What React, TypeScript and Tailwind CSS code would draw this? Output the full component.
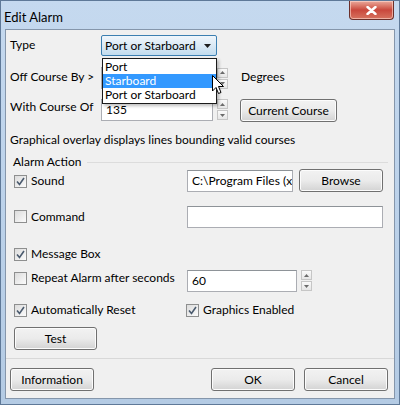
import React from "react";

const font = { fontFamily: '"Segoe UI", Lato, "Liberation Sans", Arial, sans-serif' };

function Check({ checked }: { checked?: boolean }) {
  return (
    <span className="flex h-[13px] w-[13px] shrink-0 items-center justify-center border border-[#8e8f8f] bg-gradient-to-br from-[#dcdcdc] to-[#fbfbfb]">
      {checked && (
        <svg width="9" height="9" viewBox="0 0 9 9">
          <path d="M1 4.5 L3.5 7.5 L8 1" fill="none" stroke="#4a5a6e" strokeWidth="1.6" />
        </svg>
      )}
    </span>
  );
}

function CheckRow({ checked, label }: { checked?: boolean; label: string }) {
  return (
    <div className="flex items-center gap-[4px]">
      <Check checked={checked} />
      <span>{label}</span>
    </div>
  );
}

function Btn({ label, w }: { label: string; w: string }) {
  return (
    <button
      type="button"
      className={`${w} h-[23px] rounded-[3px] border border-[#707070] bg-gradient-to-b from-[#f2f2f2] via-[#ebebeb] to-[#d3d3d3] text-[12px] text-black shadow-[inset_0_0_0_1px_#fcfcfc]`}
    >
      {label}
    </button>
  );
}

function Spin() {
  return (
    <div className="flex h-[21px] w-[11px] flex-col justify-between">
      <div className="flex h-[10px] items-center justify-center border border-[#c6c6c6] bg-gradient-to-b from-[#fafafa] to-[#e6e6e6]">
        <svg width="5" height="3" viewBox="0 0 5 3">
          <path d="M0 3 L2.5 0 L5 3Z" fill="#6b6b6b" />
        </svg>
      </div>
      <div className="flex h-[10px] items-center justify-center border border-[#c6c6c6] bg-gradient-to-b from-[#fafafa] to-[#e6e6e6]">
        <svg width="5" height="3" viewBox="0 0 5 3">
          <path d="M0 0 L2.5 3 L5 0Z" fill="#6b6b6b" />
        </svg>
      </div>
    </div>
  );
}

function Field({ value, w }: { value?: string; w: string }) {
  return (
    <div
      className={`${w} flex h-[22px] items-center overflow-hidden whitespace-nowrap border border-[#abadb3] border-t-[#8e9398] bg-white pl-[4px] text-[12px]`}
    >
      {value}
    </div>
  );
}

export default function App() {
  return (
    <div
      className="relative h-[405px] w-[400px] overflow-hidden border border-[#5f7998] bg-gradient-to-b from-[#c5d9ef] via-[#bcd2ea] to-[#b4cbe4] text-[12px] text-black"
      style={font}
    >
      {/* title bar */}
      <div className="flex h-[28px] items-start justify-between pl-[3px]">
        <span className="mt-[7px] text-[13px]">Edit Alarm</span>
        <div className="mr-[5px] flex h-[19px] w-[45px] items-center justify-center rounded-b-[4px] border border-t-0 border-[#6b2f2a] bg-gradient-to-b from-[#e9a99c] via-[#c9473c] to-[#d6725f] shadow-[inset_0_0_0_1px_rgba(255,220,210,0.6)]">
          <svg width="11" height="9" viewBox="0 0 11 9">
            <path d="M1.5 1 L9.5 8 M9.5 1 L1.5 8" stroke="#fff" strokeWidth="2.4" strokeLinecap="round" />
          </svg>
        </div>
      </div>

      {/* client area */}
      <div className="mx-[4px] flex h-[370px] flex-col border border-[#8596ab] bg-[#f0f0f0] pl-[4px] pr-[6px]">
        {/* Type */}
        <div className="mt-[5px] flex h-[21px] items-start">
          <span className="mt-[1px] w-[91px]">Type</span>
          <div className="flex h-[21px] w-[116px] items-center justify-between rounded-[2px] border border-[#3c7fb1] bg-gradient-to-b from-[#f0f6fb] via-[#dbe9f5] to-[#c2dcee] pl-[3px] pr-[5px]">
            <span>Port or Starboard</span>
            <svg width="7" height="4" viewBox="0 0 7 4">
              <path d="M0 0 L7 0 L3.5 4Z" fill="#1d1d1d" />
            </svg>
          </div>
        </div>

        {/* Off course */}
        <div className="mt-[11px] flex h-[22px] items-center">
          <span className="mt-[-2px] w-[91px]">Off Course By &gt;</span>
          <Field w="w-[112px]" />
          <div className="ml-[4px]">
            <Spin />
          </div>
          <span className="ml-[13px] mt-[-2px]">Degrees</span>
        </div>

        {/* With course */}
        <div className="mt-[10px] flex h-[22px] items-start">
          <span className="mt-[-1px] w-[91px]">With Course Of</span>
          <Field w="w-[112px]" value="135" />
          <div className="ml-[4px]">
            <Spin />
          </div>
          <div className="ml-[12px]">
            <Btn label="Current Course" w="w-[97px]" />
          </div>
        </div>

        <div className="mt-[12px] h-[14px] leading-[14px]">Graphical overlay displays lines bounding valid courses</div>

        {/* Alarm Action group */}
        <div className="mt-[8px] flex items-center">
          <span className="ml-[3px] mr-[6px] leading-[14px]">Alarm Action</span>
          <div className="h-px flex-1 bg-[#dcdcdc]" />
        </div>

        <div className="pl-[4px]">
          {/* Sound */}
          <div className="mt-[0px] flex h-[26px] items-start">
            <div className="mt-[3px] w-[173px]">
              <CheckRow checked label="Sound" />
            </div>
            <div className="mt-[1px]">
              <Field w="w-[106px]" value="C:\Program Files (x86)" />
            </div>
            <div className="ml-[6px]">
              <Btn label="Browse" w="w-[84px]" />
            </div>
          </div>

          {/* Command */}
          <div className="mt-[10px] flex h-[23px] items-center">
            <div className="w-[173px]">
              <CheckRow label="Command" />
            </div>
            <Field w="w-[196px]" />
          </div>

          <div className="mt-[17px] h-[14px]">
            <CheckRow checked label="Message Box" />
          </div>

          {/* Repeat */}
          <div className="mt-[11px] flex h-[22px] items-start">
            <div className="mt-[-1px] w-[173px]">
              <CheckRow label="Repeat Alarm after seconds" />
            </div>
            <Field w="w-[110px]" value="60" />
            <div className="ml-[4px]">
              <Spin />
            </div>
          </div>

          {/* Auto reset */}
          <div className="mt-[11px] flex h-[14px] items-center">
            <div className="w-[172px]">
              <CheckRow checked label="Automatically Reset" />
            </div>
            <CheckRow checked label="Graphics Enabled" />
          </div>

          <div className="mt-[10px]">
            <Btn label="Test" w="w-[83px]" />
          </div>
        </div>

        <div className="ml-[-4px] mr-[-6px] mt-[8px] h-px bg-[#d8d8d8]" />

        {/* bottom buttons */}
        <div className="mt-[9px] flex items-center">
          <Btn label="Information" w="w-[84px]" />
          <div className="flex-1" />
          <Btn label="OK" w="w-[84px]" />
          <div className="ml-[9px]">
            <Btn label="Cancel" w="w-[84px]" />
          </div>
        </div>
      </div>

      {/* open dropdown list */}
      <div className="absolute left-[101px] top-[57px] w-[115px] border border-[#1a1a1a] bg-white py-[1px] text-[12px] leading-[14px] shadow-[2px_2px_3px_rgba(0,0,0,0.25)]">
        <div className="px-[2px]">Port</div>
        <div className="bg-[#3399ff] px-[2px] text-white">Starboard</div>
        <div className="px-[2px]">Port or Starboard</div>
      </div>

      {/* mouse pointer */}
      <svg className="absolute left-[211px] top-[74px]" width="13" height="21" viewBox="0 0 13 21">
        <path d="M0.5 0.5 L0.5 16 L4 12.5 L6.5 18.5 L9 17.5 L6.5 11.5 L11.5 11.5 Z" fill="#fff" stroke="#000" strokeWidth="1" />
      </svg>
    </div>
  );
}
